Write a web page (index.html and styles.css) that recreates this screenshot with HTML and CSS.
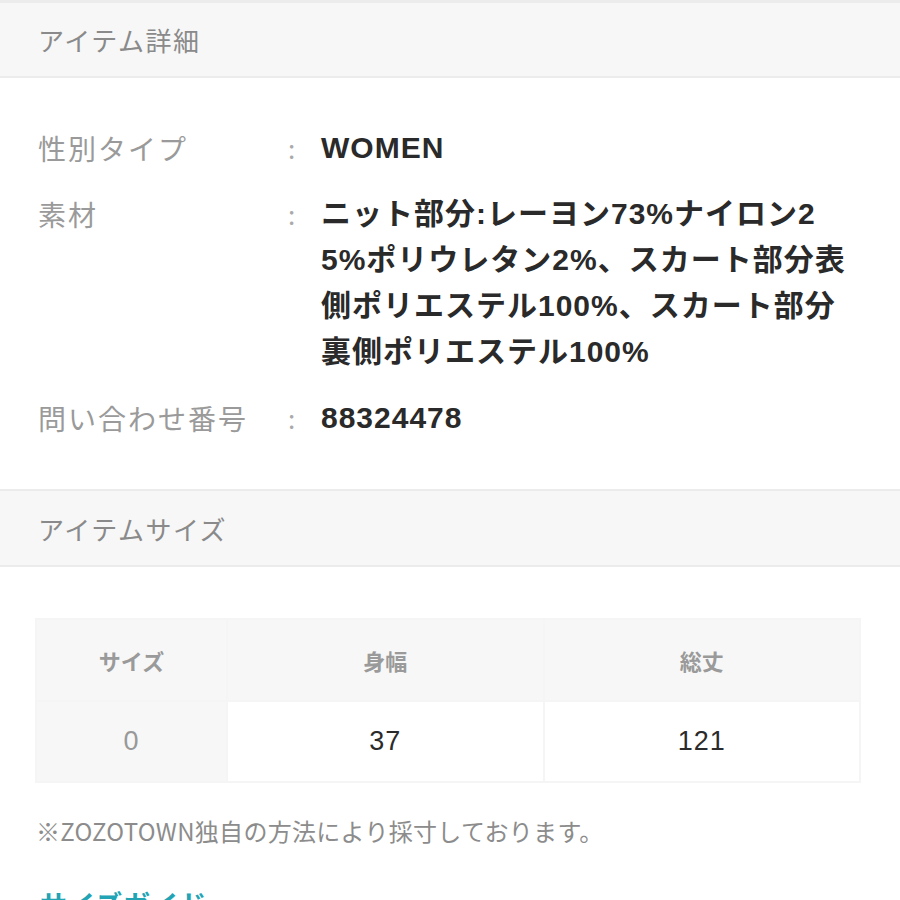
FILE: index.html
```html
<!DOCTYPE html>
<html lang="ja">
<head>
<meta charset="utf-8">
<link rel="stylesheet" href="styles.css">
</head>
<body>
<div class="page">
  <div class="sec-head sec-first">アイテム詳細</div>
  <div class="details">
    <div class="row">
      <div class="label">性別タイプ</div>
      <div class="colon">:</div>
      <div class="value">WOMEN</div>
    </div>
    <div class="row">
      <div class="label">素材</div>
      <div class="colon">:</div>
      <div class="value">ニット部分:レーヨン73%ナイロン2<br>5%ポリウレタン2%、スカート部分表<br>側ポリエステル100%、スカート部分<br>裏側ポリエステル100%</div>
    </div>
    <div class="row">
      <div class="label">問い合わせ番号</div>
      <div class="colon">:</div>
      <div class="value">88324478</div>
    </div>
  </div>
  <div class="sec-head">アイテムサイズ</div>
  <div class="sizes">
    <table class="size-table">
      <thead>
        <tr><th class="c1">サイズ</th><th>身幅</th><th>総丈</th></tr>
      </thead>
      <tbody>
        <tr><td class="c1 size">0</td><td class="num">37</td><td class="num">121</td></tr>
      </tbody>
    </table>
    <p class="note">※ZOZOTOWN独自の方法により採寸しております。</p>
    <p class="guide">サイズガイド</p>
  </div>
</div>
</body>
</html>
```

FILE: styles.css
```css
html, body {
  margin: 0;
  padding: 0;
  background: #fff;
}
body {
  font-family: "Noto Sans CJK JP", "Noto Sans", sans-serif;
  overflow: hidden;
  height: 900px;
}
.page {
  width: 900px;
}
.sec-head {
  background: #f7f7f7;
  border-top: 2px solid #ececec;
  border-bottom: 2px solid #ececec;
  box-sizing: border-box;
  padding-left: 38px;
  display: flex;
  align-items: center;
  font-size: 26px;
  letter-spacing: 1.5px;
  color: #8a8a8a;
  height: 78px;
}
.sec-first {
  border-top: 3px solid #ececec;
}
.details {
  padding: 47px 0 48px 0;
  display: flex;
  flex-direction: column;
  gap: 20px;
}
.row {
  display: flex;
  align-items: flex-start;
  line-height: 46px;
}
.label {
  width: 250px;
  padding-left: 38px;
  font-size: 28px;
  letter-spacing: 2px;
  color: #9a9a9a;
}
.colon {
  width: 33px;
  font-size: 26px;
  color: #aaa;
}
.value {
  font-family: "Liberation Sans", "Noto Sans CJK JP", sans-serif;
  font-size: 30px;
  font-weight: 600;
  color: #2a2a2a;
  letter-spacing: 1px;
}
.sizes {
  padding: 51px 37px 0 37px;
}
.size-table {
  width: 826px;
  border-collapse: separate;
  border-spacing: 2px;
  background: #f5f5f5;
  margin-left: -2px;
  table-layout: fixed;
}
.size-table th {
  height: 80px;
  background: #f7f7f7;
  font-size: 22px;
  font-weight: 700;
  color: #9a9a9a;
  padding: 0;
}
.size-table td {
  height: 79px;
  background: #fff;
  text-align: center;
  font-family: "Liberation Sans", sans-serif;
  font-size: 27px;
  color: #2b2b2b;
  padding: 0;
  letter-spacing: 1px;
}
.size-table .c1 {
  width: 189px;
}
.size-table td.size {
  background: #f7f7f7;
  color: #999;
}
.note {
  margin: 30px 0 0 -1px;
  font-size: 24px;
  color: #8c8c8c;
  letter-spacing: 0.3px;
}
.guide {
  margin: 36px 0 0 3px;
  font-size: 27px;
  font-weight: 700;
  color: #22a4b5;
  letter-spacing: 1px;
}
```
